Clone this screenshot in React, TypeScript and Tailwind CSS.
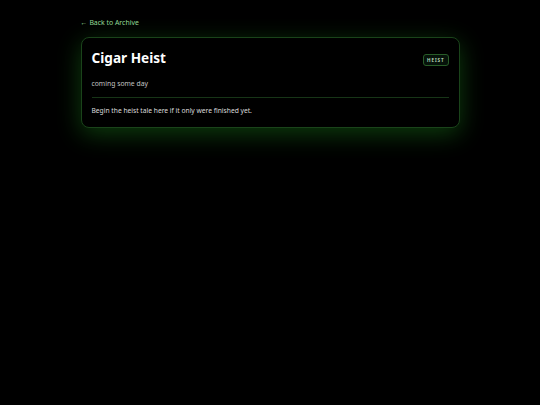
export default function App() {
  return (
    <div className="min-h-screen w-full bg-black font-['Noto_Sans',sans-serif] antialiased">
      <div className="mx-auto w-[379px] pt-[18px]">
        {/* Back link */}
        <a href="#" className="flex items-center gap-[2px] text-[6.9px] leading-[10px] text-[#93d993]">
          <span>←</span>
          <span>Back to Archive</span>
        </a>

        {/* Card */}
        <div className="mt-[9px] rounded-[8px] border border-[#1a431a] bg-black px-[10px] pt-[10px] pb-[11px] shadow-[0_6px_24px_rgba(34,160,34,0.38)]">
          <div className="flex items-start justify-between">
            <h1 className="text-[13.6px] font-bold leading-[20px] text-white">Cigar Heist</h1>
            <span className="mt-[6px] rounded-[3px] border border-[#285c28] bg-[#06120a] px-[3px] py-[2px] text-[4.6px] font-semibold leading-[6px] tracking-[0.2em] text-[#c8e2c8]">
              HEIST
            </span>
          </div>
          <p className="mt-[11px] text-[6.8px] leading-[10px] text-[#c4c4c4]">coming some day</p>
          <div className="mt-[8px] h-px bg-[#173517]" />
          <p className="mt-[8px] text-[6.7px] leading-[10px] text-[#dcdcdc]">
            Begin the heist tale here if it only were finished yet.
          </p>
        </div>
      </div>
    </div>
  );
}
